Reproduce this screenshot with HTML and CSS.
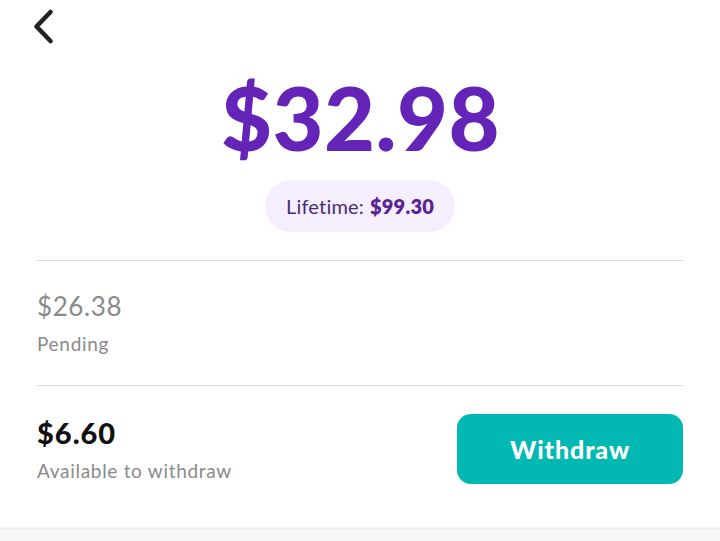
FILE: index.html
```html
<!DOCTYPE html>
<html>
<head>
<meta charset="utf-8">
<link rel="stylesheet" href="styles.css">
</head>
<body>
<div class="screen">
  <header class="topbar">
    <svg class="back" width="24" height="38" viewBox="0 0 24 38"><path d="M18.5 4 L4.5 18.5 L18.5 33" fill="none" stroke="#222" stroke-width="4.6" stroke-linecap="round" stroke-linejoin="round"/></svg>
  </header>
  <section class="hero">
    <div class="balance">$32.98</div>
    <div class="pill">Lifetime: <b>$99.30</b></div>
  </section>
  <div class="rule"></div>
  <section class="row pending">
    <div class="amount">$26.38</div>
    <div class="label">Pending</div>
  </section>
  <div class="rule"></div>
  <section class="row available">
    <div class="info">
      <div class="amount">$6.60</div>
      <div class="label">Available to withdraw</div>
    </div>
    <button class="withdraw">Withdraw</button>
  </section>
  <footer class="bottom"></footer>
</div>
</body>
</html>
```
FILE: styles.css
```css
html, body { margin: 0; padding: 0; background: #fff; }
body { font-family: "Lato", "Noto Sans", sans-serif; width: 720px; height: 541px; overflow: hidden; }
.screen { display: flex; flex-direction: column; height: 541px; }
.topbar { height: 60px; padding-left: 32px; display: flex; align-items: flex-start; padding-top: 8px; box-sizing: border-box; }
.back { display: block; }
.hero { display: flex; flex-direction: column; align-items: center; }
.balance { font-family: "Lato", sans-serif; font-weight: 900; font-size: 88px; line-height: 110px; color: #6424b8; letter-spacing: 0.5px; margin-top: 2px; padding-left: 1px; }
.pill { margin-top: 8px; height: 52px; padding: 0 21px; border-radius: 26px; background: #f5effd; display: flex; align-items: center; font-size: 20px; color: #4a2a7a; letter-spacing: 0.2px; }
.pill b { color: #5b2296; margin-left: 6px; font-weight: 800; }
.rule { height: 1px; background: #dcdcdc; margin: 0 37px; }
.hero + .rule { margin-top: 28px; }
.row { padding: 0 37px; }
.pending { padding-top: 27px; padding-bottom: 28px; }
.pending .amount { font-size: 26px; color: #8a8a8a; line-height: 36px; letter-spacing: 0.6px; }
.label { font-size: 19px; color: #8a8a8a; line-height: 26px; letter-spacing: 0.7px; }
.pending .label { margin-top: 7px; }
.available { display: flex; justify-content: space-between; align-items: center; padding-top: 28px; }
.available .amount { font-family: "Lato", sans-serif; font-weight: 900; font-size: 29px; color: #111; line-height: 36px; letter-spacing: 1px; }
.available .label { margin-top: 7px; }
.withdraw { width: 226px; height: 70px; border: none; border-radius: 14px; background: #01b8b2; color: #fff; font-family: "Lato", sans-serif; font-weight: 900; font-size: 25px; letter-spacing: 0.9px; }
.bottom { margin-top: auto; height: 12px; background: #f6f6f6; box-shadow: 0 -1px 3px rgba(0,0,0,0.12); }
```
